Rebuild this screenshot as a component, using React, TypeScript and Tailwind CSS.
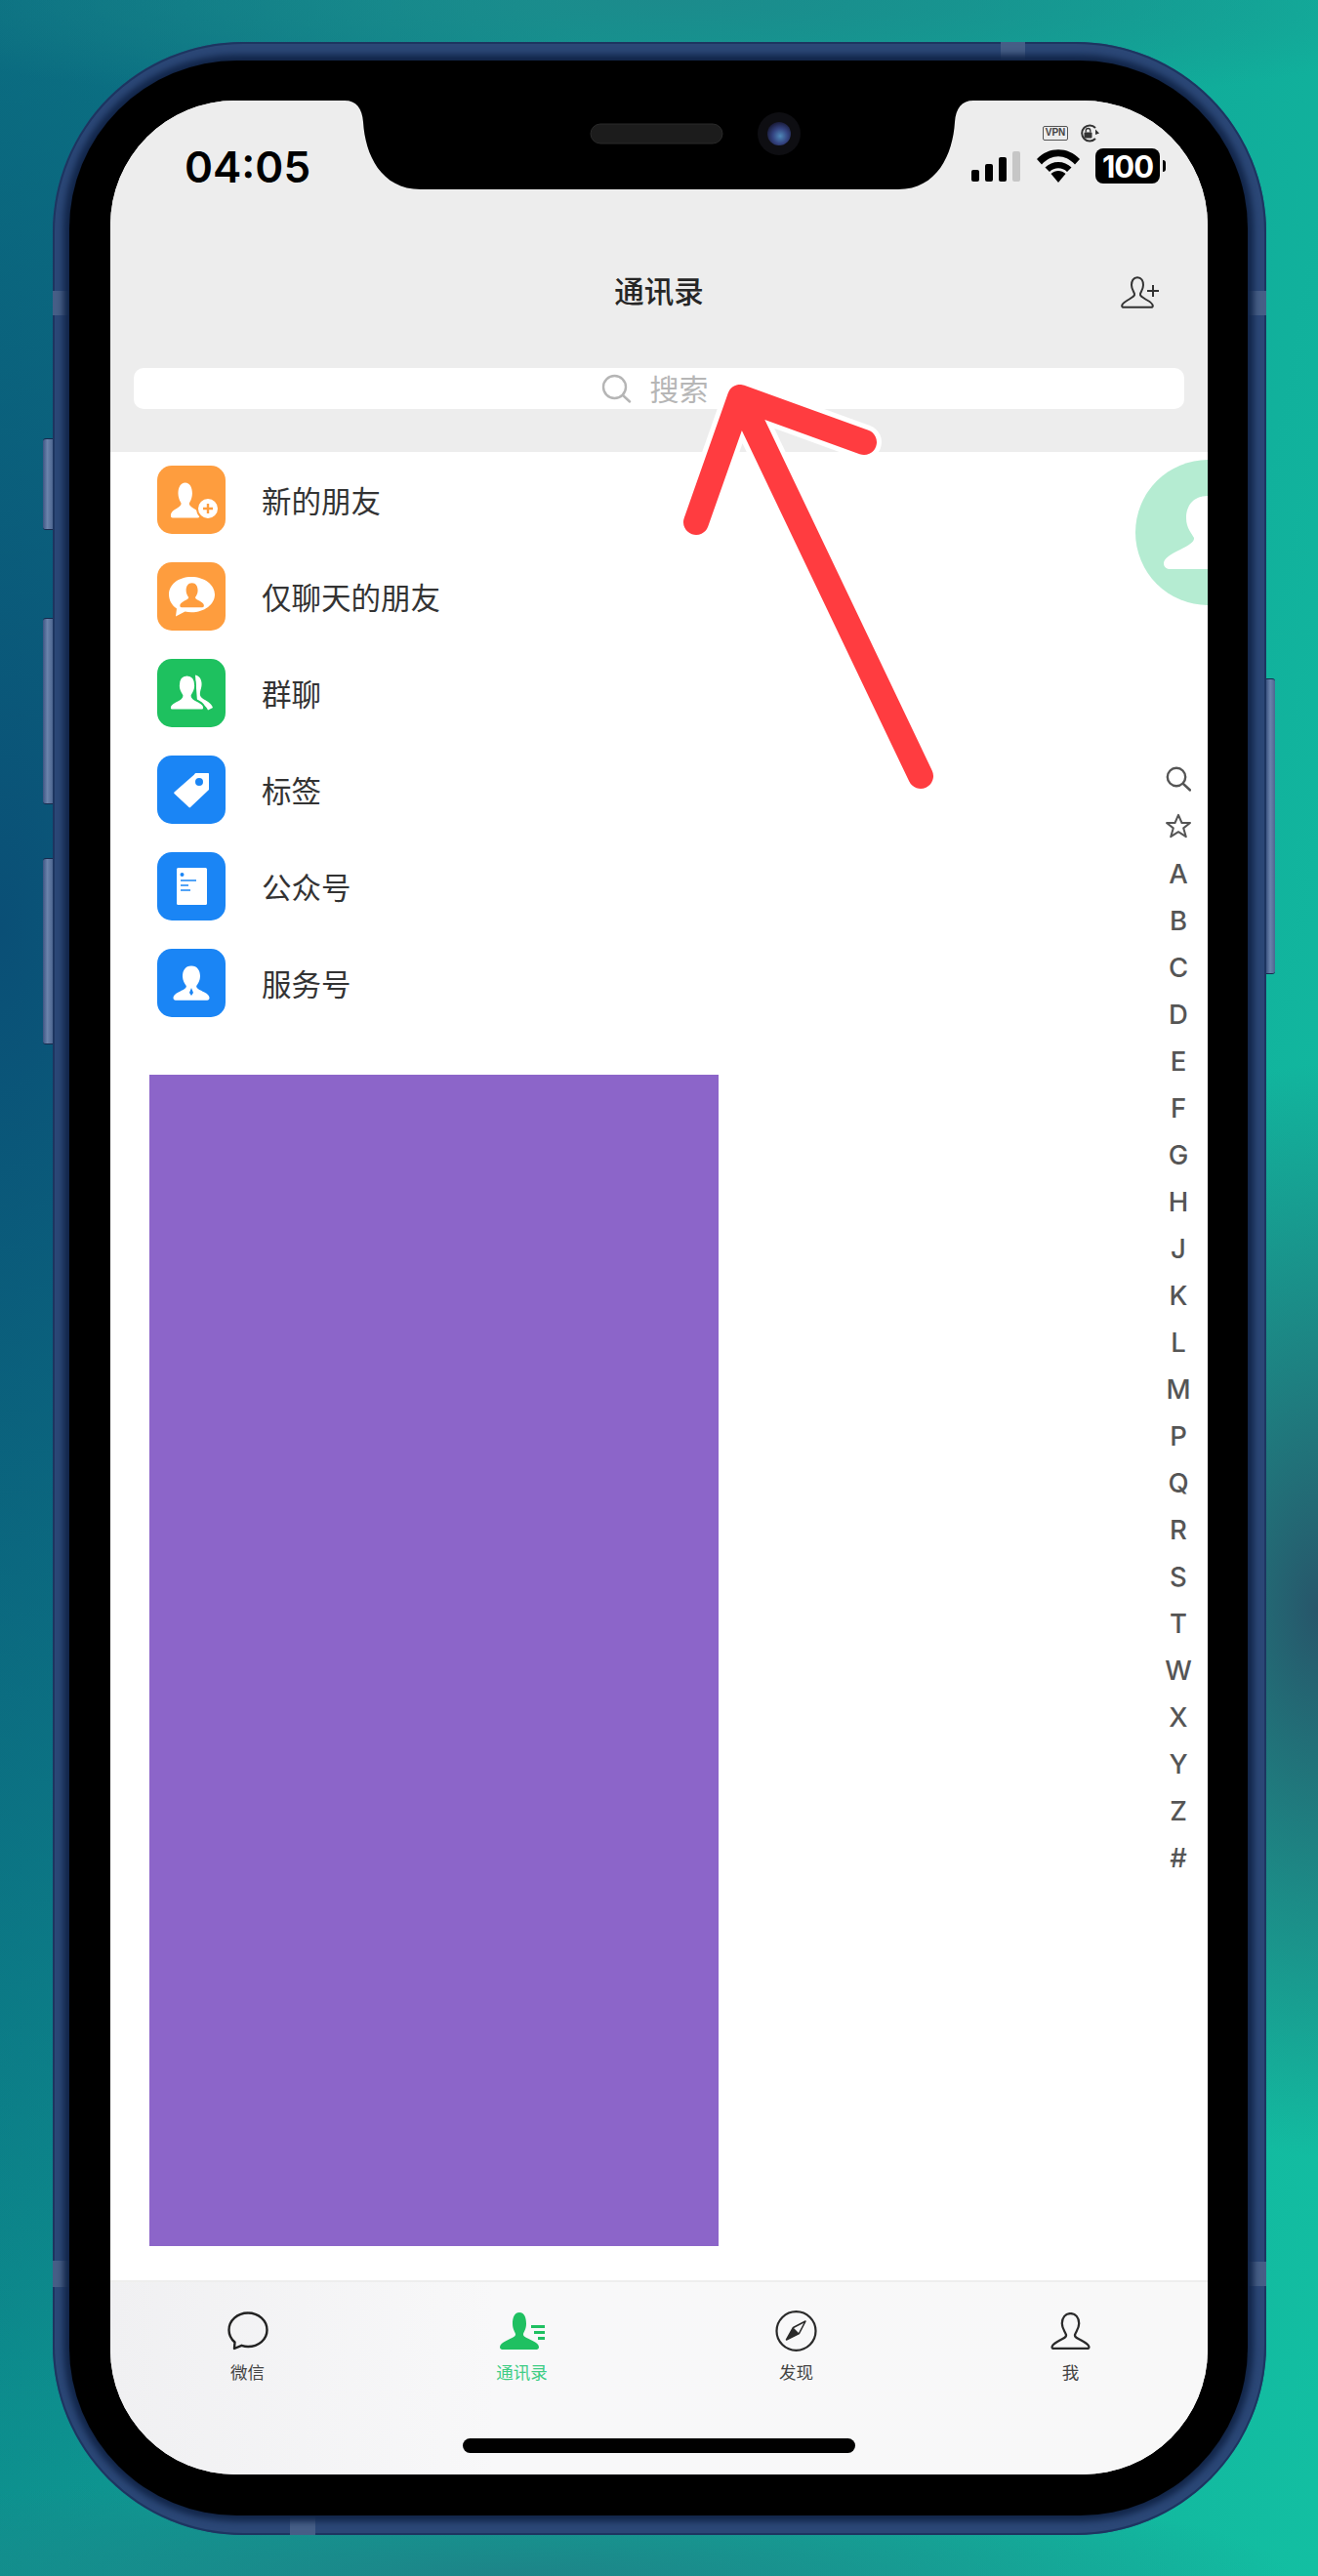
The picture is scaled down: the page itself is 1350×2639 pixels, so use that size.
import React from "react";

const PERSON =
  "M20 0.5C13.5 0.5 10.5 5.5 10.5 11.5C10.5 16 13 19.5 14.5 21.5C15 24 11 25.5 6 28C2.5 29.8 0.5 31.5 0.5 34C0.5 35.7 1.5 36.5 3 36.5H37C38.5 36.5 39.5 35.7 39.5 34C39.5 31.5 37.5 29.8 34 28C29 25.5 25 24 25.5 21.5C27 19.5 29.5 16 29.5 11.5C29.5 5.5 26.5 0.5 20 0.5Z";

const PERSON_LINE =
  "M20 1C15 1 11.5 5 11.5 11C11.5 16 14.5 19 15.5 22C16.5 25 12 26 8 28.5C4.5 30.5 1.5 32 1.5 34.5C1.5 35.5 2 36 3 36H37C38 36 38.5 35.5 38.5 34.5C38.5 32 35.5 30.5 32 28.5C28 26 23.5 25 24.5 22C25.5 19 28.5 16 28.5 11C28.5 5 25 1 20 1Z";

function IconBox({ bg, children }: { bg: string; children: React.ReactNode }) {
  return (
    <div className={`w-[70px] h-[70px] rounded-[15px] shrink-0 ${bg}`}>
      <svg width="70" height="70" viewBox="0 0 70 70">
        {children}
      </svg>
    </div>
  );
}

const rows: { label: string; icon: React.ReactNode }[] = [
  {
    label: "新的朋友",
    icon: (
      <IconBox bg="bg-[#fe9d3e]">
        <g transform="translate(13.5 17) scale(0.76 1)">
          <path d={PERSON} fill="#fff" />
        </g>
        <circle cx="52" cy="44" r="11" fill="#fff" stroke="#fe9d3e" strokeWidth="2" />
        <path d="M52 39v10M47 44h10" stroke="#fe9d3e" strokeWidth="2.4" />
      </IconBox>
    ),
  },
  {
    label: "仅聊天的朋友",
    icon: (
      <IconBox bg="bg-[#fe9d3e]">
        <path
          d="M35 15C21.5 15 12 23 12 33C12 39.5 15.5 44.5 20 47.5L19 55.5L28.5 50.5C30.5 51 33 51.3 35 51.3C48.5 51.3 59 43 59 33C59 23 48.5 15 35 15Z"
          fill="#fff"
        />
        <g transform="translate(23 21) scale(0.63 0.69)">
          <path d={PERSON} fill="#fe9d3e" />
        </g>
      </IconBox>
    ),
  },
  {
    label: "群聊",
    icon: (
      <IconBox bg="bg-[#1ec15f]">
        <path
          d="M39 16.5C45.5 18 46.5 25 45 30C43.5 35 43 38 46.5 40.5C50 43 55.5 45 57 50L52 52.5C50 47.5 45 46 41 43.5Z"
          fill="#fff"
        />
        <g transform="translate(12.5 16) scale(0.9 1)">
          <path d={PERSON} fill="#fff" stroke="#1ec15f" strokeWidth="2" />
        </g>
      </IconBox>
    ),
  },
  {
    label: "标签",
    icon: (
      <IconBox bg="bg-[#1a85f5]">
        <path
          fillRule="evenodd"
          d="M40 18H52C52.8 18 53 18.5 53 19V35L34 53C33.5 53.5 33 53.5 32.5 53L17.5 39C17 38.5 17 38 17.5 37.5L38 19.5C38.5 18.5 39 18 40 18ZM43 23A4 4 0 1 0 43 31A4 4 0 1 0 43 23Z"
          fill="#fff"
        />
      </IconBox>
    ),
  },
  {
    label: "公众号",
    icon: (
      <IconBox bg="bg-[#1a85f5]">
        <rect x="20" y="16" width="31" height="38" rx="1.5" fill="#fff" />
        <circle cx="25.5" cy="23" r="2" fill="#1a85f5" />
        <path d="M24 29H40M24 34H32M24 39H34" stroke="#1a85f5" strokeWidth="1.3" />
      </IconBox>
    ),
  },
  {
    label: "服务号",
    icon: (
      <IconBox bg="bg-[#1a85f5]">
        <g transform="translate(16 17) scale(0.95 0.98)">
          <path d={PERSON} fill="#fff" />
        </g>
        <path d="M35 40L37 45L35 48L33 45Z" fill="#1a85f5" />
      </IconBox>
    ),
  },
];

const letters = "ABCDEFGHJKLMPQRSTWXYZ#".split("");

function Tab({ label, active, children }: { label: string; active?: boolean; children: React.ReactNode }) {
  return (
    <div className="flex flex-col items-center">
      <div className="h-[42px] flex items-center justify-center">{children}</div>
      <span className={`mt-[11px] text-[17.5px] leading-[20px] ${active ? "text-[#3fcd85]" : "text-[#444444]"}`}>{label}</span>
    </div>
  );
}

const sideBtn = "bg-[linear-gradient(90deg,#3d5583_0%,#6b83ab_45%,#4d6690_100%)] border-y-[1.5px] border-[#16294c]";

export default function App() {
  return (
    <div
      className="w-[1350px] h-[2639px] overflow-hidden pl-[54px] pt-[43px] bg-[radial-gradient(ellipse_300px_560px_at_1350px_1650px,#27566a_0%,rgba(39,86,106,0)_100%),radial-gradient(ellipse_850px_120px_at_675px_0px,#1c8b8c_0%,rgba(28,139,140,0)_100%),radial-gradient(ellipse_800px_110px_at_520px_2639px,#1d8488_0%,rgba(29,132,136,0)_100%),radial-gradient(ellipse_720px_1650px_at_0px_950px,#0a4f76_0%,rgba(10,79,118,0)_100%),linear-gradient(100deg,#0b8489_0%,#13bfa2_100%)]"
      style={{ fontFamily: '"Noto Sans CJK SC", "Noto Sans", sans-serif' }}
    >
      <div className="relative w-[1243px] h-[2554px] rounded-[195px] bg-[#2b4776] shadow-[inset_0_0_0_2px_#1d3560] pt-[19px] pb-[20px] pl-[17px] pr-[19px]">
        {/* side buttons */}
        <div className={`absolute left-[-10px] top-[406px] w-[10px] h-[94px] rounded-l-[3px] ${sideBtn}`} />
        <div className={`absolute left-[-10px] top-[590px] w-[10px] h-[191px] rounded-l-[3px] ${sideBtn}`} />
        <div className={`absolute left-[-10px] top-[836px] w-[10px] h-[191px] rounded-l-[3px] ${sideBtn}`} />
        <div className={`absolute right-[-9px] top-[652px] w-[9px] h-[303px] rounded-r-[3px] ${sideBtn}`} />
        {/* antenna bands */}
        <div className="absolute left-0 top-[255px] w-[17px] h-[25px] bg-[#465e86]" />
        <div className="absolute right-0 top-[255px] w-[19px] h-[25px] bg-[#465e86]" />
        <div className="absolute left-0 top-[2273px] w-[17px] h-[27px] bg-[#465e86]" />
        <div className="absolute right-0 top-[2274px] w-[19px] h-[25px] bg-[#465e86]" />
        <div className="absolute top-0 left-[971px] w-[25px] h-[19px] bg-[#465e86]" />
        <div className="absolute bottom-0 left-[243px] w-[26px] h-[20px] bg-[#465e86]" />

        {/* bezel */}
        <div className="relative h-full rounded-[172px] bg-black pt-[41px] pb-[42px] pl-[42px] pr-[41px] shadow-[0_0_6px_6px_#12264a,0_0_0_1px_#333333]">
          {/* screen */}
          <div className="relative h-full rounded-[128px] overflow-hidden bg-white flex flex-col">
            {/* header */}
            <div className="h-[360px] shrink-0 bg-[#ededed] flex flex-col">
              <div className="h-[164px] shrink-0 flex items-start">
                <span
                  className="ml-[76px] mt-[38px] text-[44px] leading-[60px] font-semibold text-black tracking-[0px]"
                  style={{ fontFamily: 'Inter, "Liberation Sans", sans-serif' }}
                >
                  04:05
                </span>
                <div className="ml-auto mr-[43px] mt-[24px] flex flex-col">
                  <div className="ml-[73px] flex items-center gap-[11px] h-[18px]">
                    <div
                      className="w-[26px] h-[15px] border-[1.5px] border-[#555555] rounded-[2px] flex items-center justify-center text-[10px] leading-none font-bold text-[#444444]"
                      style={{ fontFamily: '"Liberation Sans", sans-serif' }}
                    >
                      VPN
                    </div>
                    <svg width="22" height="19" viewBox="0 0 22 19">
                      <path d="M17 4A8 8 0 1 0 17 15" fill="none" stroke="#333" strokeWidth="2" />
                      <path d="M17 5.5L21 9.5L17 11Z" fill="#333" />
                      <rect x="5.5" y="8.5" width="8" height="6" rx="1" fill="#333" />
                      <path d="M7.2 8.5V6.8A2.3 2.3 0 0 1 11.8 6.8V8.5" fill="none" stroke="#333" strokeWidth="1.3" />
                    </svg>
                  </div>
                  <div className="flex items-center mt-[7px]">
                    <div className="flex items-end gap-[6px] h-[31px]">
                      <div className="w-[8px] h-[12px] rounded-[2px] bg-black" />
                      <div className="w-[8px] h-[18px] rounded-[2px] bg-black" />
                      <div className="w-[8px] h-[25px] rounded-[2px] bg-black" />
                      <div className="w-[8px] h-[31px] rounded-[2px] bg-[#c6c6c6]" />
                    </div>
                    <svg className="ml-[17px]" width="44" height="34" viewBox="0 0 44 34">
                      <path d="M22 34L14.5 25C19 21 25 21 29.5 25Z" fill="#000" />
                      <path d="M8.5 18.5C15.5 11 28.5 11 35.5 18.5L31 23C26 18 18 18 13 23Z" fill="#000" />
                      <path d="M0 10C12 -3 32 -3 44 10L39 15.5C29 4.5 15 4.5 5 15.5Z" fill="#000" />
                    </svg>
                    <div
                      className="ml-[16px] w-[66px] h-[36px] rounded-[8px] bg-black text-white flex items-center justify-center text-[31px] leading-none font-bold tracking-[-1px]"
                      style={{ fontFamily: 'Inter, "Liberation Sans", sans-serif' }}
                    >
                      100
                    </div>
                    <div className="ml-[3px] w-[3px] h-[12px] rounded-r-[3px] bg-black" />
                  </div>
                </div>
              </div>
              <div className="h-[60px] shrink-0 relative flex items-center justify-center">
                <span className="text-[30.5px] leading-[40px] font-medium text-[#262626]">通讯录</span>
                <svg className="absolute right-[48px] top-[16px]" width="41" height="33" viewBox="0 0 41 33">
                  <path
                    d="M17 1.2C12.8 1.2 11 5 11 9C11 13.5 13.5 16 14 18C14.6 20.5 12 21.5 7 24.5C3.5 26.5 1.5 28 1.2 30C1.1 31 1.6 31.8 3 31.8H31C32.4 31.8 32.9 31 32.8 30C32.4 28 30.5 26.5 27 24.5C22 21.5 19.4 20.5 20 18C20.5 16 23 13.5 23 9C23 5 21.2 1.2 17 1.2Z"
                    fill="none"
                    stroke="#333"
                    strokeWidth="2"
                  />
                  <path d="M33 9V21M27 15H39" stroke="#333" strokeWidth="2" />
                </svg>
              </div>
              <div className="mt-[50px] mx-[24px] h-[42px] shrink-0 rounded-[10px] bg-white flex items-center justify-center gap-[19px] pr-[9px]">
                <svg width="31" height="30" viewBox="0 0 31 30">
                  <circle cx="13.5" cy="13.5" r="11.5" fill="none" stroke="#b5b5b5" strokeWidth="2.4" />
                  <path d="M22 22L29 28.5" stroke="#b5b5b5" strokeWidth="2.4" strokeLinecap="round" />
                </svg>
                <span className="text-[30px] leading-[40px] text-[#b6b6b6] pb-[2px]">搜索</span>
              </div>
            </div>

            {/* list */}
            <div className="flex-1 flex flex-col">
              {rows.map((r) => (
                <div key={r.label} className="h-[99px] shrink-0 flex items-start pt-[14px] pl-[48px] gap-[37px]">
                  {r.icon}
                  <div className="h-[70px] flex items-center pb-[1px]">
                    <span className="text-[30.5px] leading-[40px] text-[#333333]">{r.label}</span>
                  </div>
                </div>
              ))}
              <div className="ml-[40px] mt-[44px] w-[583px] h-[1200px] bg-[#8c65c9]" />
            </div>

            {/* tab bar */}
            <div className="h-[199px] shrink-0 border-t-2 border-[#eeeeee] bg-[linear-gradient(90deg,#f0f0f2_0%,#f8f8f9_35%,#f8f8f8_100%)] flex flex-col">
              <div className="grid grid-cols-4 pt-[29px]">
                <Tab label="微信">
                  <svg width="42" height="40" viewBox="0 0 42 40">
                    <path
                      d="M21 1.5C10 1.5 1.5 9.5 1.5 19C1.5 24.5 4 28.5 7.5 31.5L7 38L14.5 34.8C16.5 35.5 19 36 21 36C32 36 40.5 28.5 40.5 19C40.5 9.5 32 1.5 21 1.5Z"
                      fill="none"
                      stroke="#222"
                      strokeWidth="2.4"
                      strokeLinejoin="round"
                    />
                  </svg>
                </Tab>
                <Tab label="通讯录" active>
                  <svg width="46" height="38" viewBox="0 0 46 38">
                    <path
                      d="M20 0C14.5 0 13 6 13 11.5C13 17 15.5 20 16 22C16.5 25 12 26 6.5 29C2.5 31 0 33 0 35.5C0 37 1 38 2.5 38H37.5C39 38 40 37 40 35.5C40 33 37.5 31 33.5 29C28 26 23.5 25 24 22C24.5 20 27 17 27 11.5C27 6 25.5 0 20 0Z"
                      fill="#1fc061"
                    />
                    <path d="M32 13H46V16H32ZM35 19H46V22H35ZM39 25H46V28H39Z" fill="#1fc061" />
                  </svg>
                </Tab>
                <Tab label="发现">
                  <svg width="43" height="42" viewBox="0 0 43 42">
                    <ellipse cx="21.5" cy="21" rx="20" ry="19.8" fill="none" stroke="#2a2a2a" strokeWidth="2.2" />
                    <path d="M31 11L24.5 23.5L11.5 30L18.5 17.5Z" fill="none" stroke="#2a2a2a" strokeWidth="1.6" strokeLinejoin="round" />
                    <path d="M11.5 30L18.5 17.5L24.5 23.5Z" fill="#2a2a2a" />
                  </svg>
                </Tab>
                <Tab label="我">
                  <svg width="41" height="38" viewBox="0 0 40 37">
                    <path d={PERSON_LINE} fill="none" stroke="#2a2a2a" strokeWidth="2.2" />
                  </svg>
                </Tab>
              </div>
              <div className="mt-auto mb-[22px] mx-auto w-[402px] h-[15px] rounded-full bg-black" />
            </div>

            {/* avatar peeking from the right edge */}
            <div className="absolute left-[1050px] top-[368px] w-[149px] h-[149px] rounded-full bg-[#b5ecd2] overflow-hidden">
              <svg width="149" height="149" viewBox="0 0 149 149">
                <path
                  d="M75 37C60 37 52 46 52 60C52 70 58 76 60 80C60.5 84 56 87 46 92C36 97 29 101 29 106C29 110 32 112 36 112H115C119 112 122 110 122 106C122 101 115 97 105 92C95 87 90 84 90 80C92 76 98 70 98 60C98 46 90 37 75 37Z"
                  fill="#fff"
                />
              </svg>
            </div>

            {/* alphabet index */}
            <div
              className="absolute right-0 top-[671px] w-[60px] flex flex-col items-center text-[#555555]"
              style={{ fontFamily: 'Inter, "Liberation Sans", sans-serif' }}
            >
              <div className="h-[48px] flex items-center justify-center">
                <svg width="26" height="26" viewBox="0 0 26 26">
                  <circle cx="11" cy="11" r="9.2" fill="none" stroke="#555" strokeWidth="2.4" />
                  <path d="M18 18L25 24.5" stroke="#555" strokeWidth="2.4" strokeLinecap="round" />
                </svg>
              </div>
              <div className="h-[48px] flex items-center justify-center">
                <svg width="28" height="26" viewBox="0 0 28 26">
                  <path
                    d="M14 1.8L17.5 10H26L19.2 15.4L21.8 24.2L14 19.2L6.2 24.2L8.8 15.4L2 10H10.5Z"
                    fill="none"
                    stroke="#555"
                    strokeWidth="2"
                    strokeLinejoin="round"
                  />
                </svg>
              </div>
              {letters.map((l) => (
                <div key={l} className="h-[48px] pt-[3px] flex items-center justify-center text-[27.5px] leading-none font-medium">
                  {l}
                </div>
              ))}
            </div>

            {/* notch */}
            <div className="absolute top-0 left-0">
              <svg width="1124" height="92" viewBox="0 0 1124 92">
                <path d="M240 0C252 0 258 8 259 22C261 55 277 91 318 91L807 91C847 91 863 55 865 22C866 8 872 0 884 0Z" fill="#000" />
                <rect x="492" y="24" width="135" height="20" rx="10" fill="#1c1c1c" stroke="#2a2a2a" />
                <circle cx="685" cy="34" r="22" fill="#0e0e12" />
                <defs>
                  <radialGradient id="lens" cx="0.55" cy="0.6" r="0.6">
                    <stop offset="0" stopColor="#4f88b8" />
                    <stop offset="0.55" stopColor="#33427f" />
                    <stop offset="1" stopColor="#1a1c3a" />
                  </radialGradient>
                </defs>
                <circle cx="685" cy="34" r="12" fill="url(#lens)" />
              </svg>
            </div>

            {/* annotation arrow */}
            <div className="absolute top-0 left-0 pointer-events-none">
              <svg width="1124" height="720" viewBox="113 103 1124 720">
                <path d="M713 535L758 407L885 453M758 407L943 795" fill="none" stroke="#fff" strokeWidth="36" strokeLinecap="round" strokeLinejoin="round" />
                <path d="M713 535L758 407L885 453M758 407L943 795" fill="none" stroke="#ff3c40" strokeWidth="26" strokeLinecap="round" strokeLinejoin="round" />
              </svg>
            </div>
          </div>
        </div>
      </div>
    </div>
  );
}
